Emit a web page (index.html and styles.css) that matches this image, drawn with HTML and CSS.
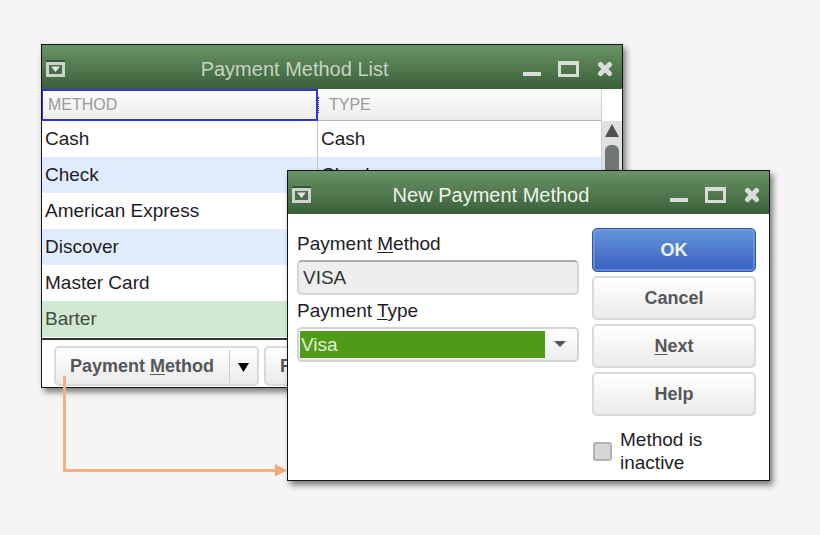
FILE: index.html
```html
<!DOCTYPE html>
<html lang="en">
<head>
    <meta charset="UTF-8">
    <meta name="viewport" content="width=device-width, initial-scale=1.0">
    <title>Payment Method List</title>
    <link rel="stylesheet" href="styles.css">
</head>
<body>

<svg class="sprite" aria-hidden="true">
    <symbol id="icon-menu" viewBox="0 0 20 18">
        <path d="M0 1h19" stroke="#35563a" stroke-width="2" />
        <rect x="1.500" y="3.500" width="16" height="12" fill="#4a6e49" stroke="#cdd3cb" stroke-width="3" />
        <path d="M5 6.500h9l-4.500 5.500z" fill="#e4e8e2" />
    </symbol>
    <symbol id="icon-minimize" viewBox="0 0 18 16">
        <rect x="0" y="11" width="18" height="4" fill="#d9ddd8" />
    </symbol>
    <symbol id="icon-maximize" viewBox="0 0 22 16">
        <path d="M0 0h21v16H0zM3 4v9h15V4z" fill="#d9ddd8" fill-rule="evenodd" />
    </symbol>
    <symbol id="icon-close" viewBox="0 0 16 16">
        <path d="M3.500 3.500l9 9M12.500 3.500l-9 9" stroke="#d9ddd8" stroke-width="5" stroke-linecap="round" />
    </symbol>
</svg>

<div class="desktop">
    <section class="window list-window">
        <header class="titlebar">
            <button type="button" class="icon-btn" aria-label="Window menu"><svg width="20" height="18"><use href="#icon-menu" /></svg></button>
            <h2>Payment Method List</h2>
            <div class="controls">
                <button type="button" class="icon-btn" aria-label="Minimize"><svg width="18" height="16"><use href="#icon-minimize" /></svg></button>
                <button type="button" class="icon-btn" aria-label="Maximize"><svg width="22" height="16"><use href="#icon-maximize" /></svg></button>
                <button type="button" class="icon-btn" aria-label="Close"><svg width="16" height="16"><use href="#icon-close" /></svg></button>
            </div>
        </header>

        <div class="list">
            <table>
                <thead>
                    <tr><th class="sorted">METHOD</th><th><span class="handle"></span>TYPE</th></tr>
                </thead>
                <tbody>
                    <tr><td>Cash</td><td>Cash</td></tr>
                    <tr><td>Check</td><td>Check</td></tr>
                    <tr><td>American Express</td><td></td></tr>
                    <tr><td>Discover</td><td></td></tr>
                    <tr><td>Master Card</td><td></td></tr>
                    <tr class="selected"><td>Barter</td><td></td></tr>
                </tbody>
            </table>
            <div class="scrollbar">
                <svg class="scroll-up" width="14" height="13" viewBox="0 0 14 13" aria-hidden="true"><path d="M7 0l7 13H0z" fill="#505050" /></svg>
                <div class="thumb"></div>
            </div>
        </div>

        <footer class="toolbar">
            <div class="split">
                <button type="button" class="split-main">Payment <u>M</u>ethod</button>
                <button type="button" class="split-arrow" aria-label="More"><svg width="11" height="9" viewBox="0 0 11 9"><path d="M0 0h11L5.500 9z" fill="#000" /></svg></button>
            </div>
            <div class="split">
                <button type="button" class="split-main">Reports</button>
            </div>
        </footer>
    </section>

    <svg class="pointer" width="226" height="102" viewBox="0 0 226 102" aria-hidden="true">
        <path d="M3.500 0v94.500h212" fill="none" stroke="#f0b187" stroke-width="3" />
        <path d="M214 88l12 6.500-12 6z" fill="#f0ab7c" />
    </svg>

    <section class="window dialog">
        <header class="titlebar active">
            <button type="button" class="icon-btn" aria-label="Window menu"><svg width="20" height="18"><use href="#icon-menu" /></svg></button>
            <h2>New Payment Method</h2>
            <div class="controls">
                <button type="button" class="icon-btn" aria-label="Minimize"><svg width="18" height="16"><use href="#icon-minimize" /></svg></button>
                <button type="button" class="icon-btn" aria-label="Maximize"><svg width="22" height="16"><use href="#icon-maximize" /></svg></button>
                <button type="button" class="icon-btn" aria-label="Close"><svg width="16" height="16"><use href="#icon-close" /></svg></button>
            </div>
        </header>

        <form class="dialog-body">
            <div class="fields">
                <label for="method">Payment <u>M</u>ethod</label>
                <input type="text" id="method" value="VISA">
                <label for="type">Payment <u>T</u>ype</label>
                <div class="combo">
                    <select id="type">
                        <option>Visa</option>
                    </select>
                    <svg width="32" height="7" viewBox="0 0 32 7" aria-hidden="true"><path d="M9 0h12l-6 6z" fill="#555" /></svg>
                </div>
            </div>
            <div class="actions">
                <button type="button" class="btn primary">OK</button>
                <button type="button" class="btn">Cancel</button>
                <button type="button" class="btn"><u>N</u>ext</button>
                <button type="button" class="btn">Help</button>
                <div class="inactive">
                    <input type="checkbox" id="inactive">
                    <label for="inactive">Method is inactive</label>
                </div>
            </div>
        </form>
    </section>
</div>

</body>
</html>
```
FILE: styles.css
```css
* {
    box-sizing: border-box;
}

body {
    margin: 0;
    background: #f5f5f5;
    font-family: "Liberation Sans", Arial, sans-serif;
    font-size: 19px;
    color: #1f1c26;
}

button,
input,
select {
    font: inherit;
    color: inherit;
    margin: 0;
}

u {
    text-decoration-thickness: 1px;
    text-underline-offset: 2px;
}

.sprite {
    display: none;
}

.desktop {
    position: relative;
    min-height: 100vh;
    overflow: hidden;
}

.window {
    position: absolute;
    border: 1px solid #151515;
    background: #fff;
    box-shadow: 3px 4px 6px rgba(0, 0, 0, 0.5);
}

.list-window {
    left: 5%;
    top: 44px;
    width: 71%;
}

.dialog {
    left: 35%;
    right: 50px;
    top: 170px;
}

/* title bars */
.titlebar {
    display: flex;
    align-items: center;
    height: 44px;
    padding: 4px 9px 0 4px;
    background: linear-gradient(#6a9468, #52794f 50%, #3b6039);
    color: #c5d4c2;
}

.titlebar.active {
    height: 43px;
    color: #eef5ea;
}

.titlebar h2 {
    flex: 1;
    margin: 0;
    font-size: 20px;
    font-weight: normal;
    line-height: 24px;
    text-align: center;
}

.icon-btn {
    display: flex;
    padding: 0;
    border: none;
    background: none;
}

.controls {
    display: flex;
    gap: 17px;
}

/* method list */
.list {
    display: flex;
    border-bottom: 2px solid #333;
}

table {
    flex: 1;
    border-collapse: separate;
    border-spacing: 0;
    table-layout: fixed;
    margin-bottom: 1px;
}

th {
    height: 32px;
    padding: 0 10px 0 0;
    border-bottom: 1px solid #b4b4b4;
    background: linear-gradient(#fdfdfd, #ececec);
    color: #9a9a9a;
    font-size: 16px;
    font-weight: normal;
    text-align: left;
}

th.sorted {
    width: 276px;
    padding: 0 5px;
    border: 2px solid #3434cc;
    border-left-width: 1px;
}

.handle {
    display: inline-block;
    height: 16px;
    margin-right: 10px;
    border-left: 1px dotted #3434cc;
    vertical-align: middle;
}

td {
    height: 36px;
    padding: 0 3px;
}

td:first-child {
    border-right: 1px solid #c4c4c4;
}

tbody tr:nth-child(even) {
    background: #e1edfe;
}

tbody tr.selected {
    background: #d1e9d0;
    color: #444c44;
}

.scrollbar {
    display: flex;
    flex-direction: column;
    align-items: center;
    width: 21px;
    padding-top: 35px;
    border-left: 1px solid #d0d0d0;
    background: linear-gradient(#fff 32px, #e0e0e0 32px);
}

.thumb {
    flex: 1;
    width: 14px;
    margin-top: 8px;
    border-radius: 6px;
    background: #707575;
}

.toolbar {
    display: flex;
    gap: 5px;
    padding: 6px 12px 1px;
}

.split {
    display: flex;
    align-items: center;
    height: 40px;
    border: 2px solid #dadada;
    border-radius: 5px;
    background: linear-gradient(#fff, #eaeaea);
    color: #55565a;
}

.split-main,
.split-arrow {
    height: 33px;
    padding: 0 15px 0 14px;
    border: none;
    background: none;
    font-size: 18px;
    font-weight: bold;
}

.split-arrow {
    padding: 0 8px;
    border-left: 1px solid #ccc;
}

/* connector from the toolbar button to the dialog */
.pointer {
    position: absolute;
    left: 61px;
    top: 376px;
}

/* dialog */
.dialog-body {
    display: flex;
    gap: 13px;
    padding: 14px 13px 6px 9px;
}

.fields {
    flex: 1;
    display: flex;
    flex-direction: column;
}

.fields label {
    line-height: 32px;
}

.fields input {
    width: 100%;
    height: 35px;
    padding: 0 4px;
    border: 2px solid #d4d4d4;
    border-top-color: #adadad;
    border-radius: 5px;
    background: #eee;
    color: #333;
}

.combo {
    display: flex;
    align-items: center;
    height: 35px;
    padding: 1px 0 2px 1px;
    border: 2px solid #d4d4d4;
    border-radius: 5px;
    background: linear-gradient(#fff, #ededed);
}

.combo select {
    appearance: none;
    flex: 1;
    height: 27px;
    padding: 0 1px;
    border: none;
    border-radius: 0;
    background: #4d9b17;
    color: #e2f2d4;
}

.combo svg {
    pointer-events: none;
}

.actions {
    display: flex;
    flex-direction: column;
    gap: 4px;
    width: 164px;
}

.btn {
    height: 44px;
    padding: 0;
    border: 2px solid #dadada;
    border-radius: 5px;
    background: linear-gradient(#fff, #ebebeb);
    color: #55565a;
    font-size: 18px;
    font-weight: bold;
}

.btn.primary {
    border: 1px solid #35579f;
    background: linear-gradient(#6495db, #3960c0);
    box-shadow: inset 0 0 0 2px rgba(120, 160, 225, 0.6);
    color: #eef3ff;
}

.inactive {
    display: flex;
    align-items: center;
    gap: 8px;
    padding: 8px 1px 0;
    line-height: 23px;
}

.inactive input {
    appearance: none;
    flex: none;
    width: 19px;
    height: 19px;
    border: 2px solid #b2b2b2;
    border-radius: 3px;
    background: #d6d6d6;
}
```
